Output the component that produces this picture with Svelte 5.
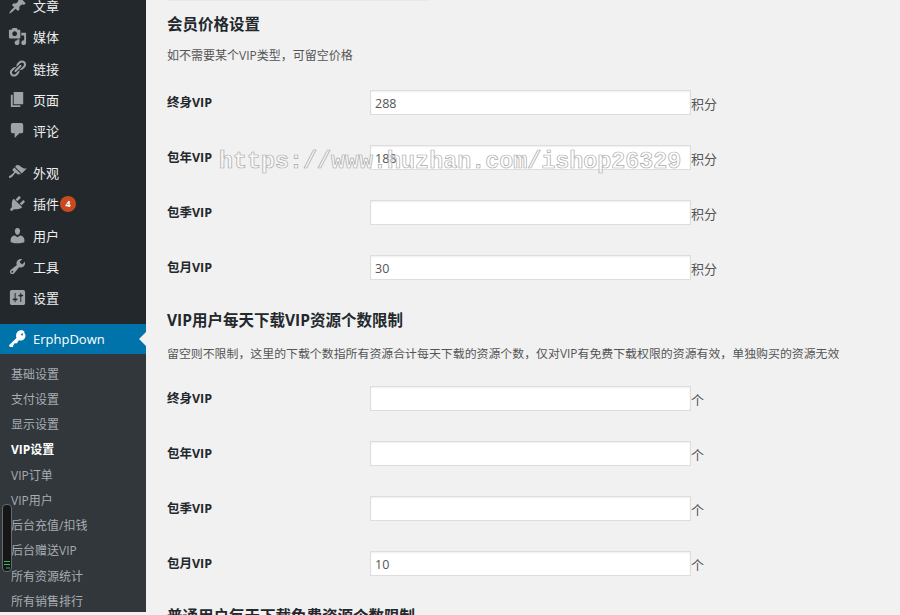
<script>
  const menu1 = [
    { label: "文章", icon: "M10.44 3.02l1.82-1.82 6.36 6.35-1.83 1.82c-1.05-.68-2.48-.57-3.41.36l-.75.75c-.92.93-1.04 2.35-.35 3.41l-1.83 1.82-2.41-2.41-2.8 2.79c-.42.42-3.38 2.71-3.8 2.29s1.86-3.39 2.28-3.81l2.79-2.79L4.1 9.36l1.83-1.82c1.05.69 2.48.57 3.4-.36l.75-.75c.93-.92 1.05-2.35.36-3.41z" },
    { label: "媒体", icon: "M13 11V4c0-.55-.45-1-1-1h-1.67L9 1H5L3.67 3H2c-.55 0-1 .45-1 1v7c0 .55.45 1 1 1h10c.55 0 1-.45 1-1zM7 4.5c1.38 0 2.5 1.12 2.5 2.5S8.38 9.5 7 9.5 4.5 8.38 4.5 7 5.62 4.5 7 4.5zM14 6h5v10.5c0 1.38-1.12 2.5-2.5 2.5S14 17.88 14 16.5s1.12-2.5 2.5-2.5c.17 0 .34.02.5.05V9h-3V6zm-4 8.05V13h2v3.5c0 1.38-1.12 2.5-2.5 2.5S7 17.88 7 16.5 8.12 14 9.5 14c.17 0 .34.02.5.05z" },
    { label: "链接", icon: "M17.74 2.76c1.68 1.69 1.68 4.41 0 6.1l-1.53 1.52c-1.12 1.12-2.7 1.47-4.14 1.09l2.62-2.61.76-.77.76-.76c.84-.84.84-2.2 0-3.04-.84-.85-2.2-.85-3.04 0l-.77.76-3.38 3.38c-.37-1.44-.02-3.02 1.1-4.14l1.52-1.53c1.69-1.68 4.42-1.68 6.1 0zM8.59 13.43l5.34-5.34c.42-.42.42-1.1 0-1.52-.44-.43-1.13-.39-1.53 0l-5.33 5.34c-.42.42-.42 1.1 0 1.52.44.43 1.13.39 1.52 0zm-.76 2.29l4.14-4.15c.38 1.44.03 3.02-1.09 4.14l-1.52 1.53c-1.69 1.68-4.41 1.68-6.1 0-1.68-1.68-1.68-4.42 0-6.1l1.53-1.52c1.12-1.12 2.7-1.47 4.14-1.1l-4.14 4.15c-.85.84-.85 2.2 0 3.05.84.84 2.2.84 3.04 0z" },
    { label: "页面", icon: "M6 15V2h10v13H6zm-1 1h8v2H3V5h2v11z" },
    { label: "评论", icon: "M5 2h9c1.1 0 2 .9 2 2v7c0 1.1-.9 2-2 2h-2l-5 5v-5H5c-1.1 0-2-.9-2-2V4c0-1.1.9-2 2-2z" },
  ];
  const menu2 = [
    { label: "外观", icon: "M14.48 11.06L7.41 3.99l1.5-1.5c.5-.56 2.3-.47 3.51.32 1.21.8 1.43 1.28 2.91 2.1 1.18.64 2.45 1.26 4.45.85zm-.71.71L6.7 4.7 4.93 6.47c-.39.39-.39 1.02 0 1.41l1.06 1.06c.39.39.39 1.03 0 1.42-.6.6-1.43 1.11-2.21 1.69-.35.26-.7.53-1.01.84C1.43 13.23.4 14.75 1.2 15.55c.8.79 2.32-.24 3.69-1.57.31-.31.58-.66.84-1.01.58-.78 1.09-1.61 1.69-2.21.39-.39 1.02-.39 1.41 0l1.06 1.06c.39.39 1.02.39 1.41 0z" },
    { label: "插件", badge: 4, icon: "M13.11 4.36L9.87 7.6 8 5.73l3.24-3.24c.35-.34 1.05-.2 1.56.32.52.51.66 1.21.31 1.55zm-8 1.77l.91-1.12 9.01 9.01-1.19.84c-.71.71-2.63 1.16-3.82 1.16H6.14L4.9 17.26c-.59.59-1.54.59-2.12 0-.59-.58-.59-1.53 0-2.12l1.24-1.24v-3.88c0-1.13.4-3.19 1.09-3.89zm7.26 3.97l3.24-3.24c.34-.35 1.04-.21 1.55.31.52.51.66 1.21.31 1.55l-3.24 3.25z" },
    { label: "用户", icon: "M10 9.25c-2.27 0-2.73-3.44-2.73-3.44C7 4.02 7.82 2 9.97 2c2.16 0 2.98 2.02 2.71 3.81 0 0-.41 3.44-2.68 3.44zm0 2.57L12.72 10c2.39 0 4.52 2.33 4.52 4.53v2.49s-3.65 1.13-7.24 1.13c-3.65 0-7.24-1.13-7.24-1.13v-2.49c0-2.25 1.94-4.48 4.47-4.48z" },
    { label: "工具", icon: "M16.68 9.77c-1.34 1.34-3.3 1.67-4.95.99l-5.41 6.52c-.99.99-2.59.99-3.58 0s-.99-2.59 0-3.57l6.52-5.42c-.68-1.65-.35-3.61.99-4.95 1.28-1.28 3.12-1.62 4.72-1.06l-2.89 2.89 2.82 2.82 2.86-2.87c.53 1.58.18 3.39-1.08 4.65zM3.81 16.21c.4.39 1.04.39 1.43 0 .4-.4.4-1.04 0-1.43-.39-.4-1.03-.4-1.43 0-.39.39-.39 1.03 0 1.43z" },
    { label: "设置", icon: "M18 16V4c0-1.1-.9-2-2-2H4c-1.1 0-2 .9-2 2v12c0 1.1.9 2 2 2h12c1.1 0 2-.9 2-2zM8 11h1c.55 0 1 .45 1 1s-.45 1-1 1H8v1.5c0 .28-.22.5-.5.5s-.5-.22-.5-.5V13H6c-.55 0-1-.45-1-1s.45-1 1-1h1V5.5c0-.28.22-.5.5-.5s.5.22.5.5V11zm5-2h-1c-.55 0-1-.45-1-1s.45-1 1-1h1V5.5c0-.28.22-.5.5-.5s.5.22.5.5V7h1c.55 0 1 .45 1 1s-.45 1-1 1h-1v5.5c0 .28-.22.5-.5.5s-.5-.22-.5-.5V9z" },
  ];
  const keyIcon = "M16.95 2.58c1.96 1.95 1.96 5.12 0 7.07-1.51 1.51-3.75 1.84-5.59 1.01l-1.87 3.31-2.99.31L5 18H2l-1-2 7.95-7.69c-.92-2.26-.5-4.87 1.32-6.69 1.95-1.95 5.12-1.96 7.08-.04zm-2.83 2.83c.39.39 1.02.39 1.41 0 .39-.39.39-1.02 0-1.41-.39-.39-1.02-.39-1.41 0-.39.39-.39 1.02 0 1.41z";
  const submenu = ["基础设置", "支付设置", "显示设置", "VIP设置", "VIP订单", "VIP用户", "后台充值/扣钱", "后台赠送VIP", "所有资源统计", "所有销售排行"];

  const prices = [
    { label: "终身VIP", value: "288" },
    { label: "包年VIP", value: "188" },
    { label: "包季VIP", value: "" },
    { label: "包月VIP", value: "30" },
  ];
  const limits = [
    { label: "终身VIP", value: "" },
    { label: "包年VIP", value: "" },
    { label: "包季VIP", value: "" },
    { label: "包月VIP", value: "10" },
  ];
</script>

<div class="page">
  <aside class="sidebar">
    <nav class="menu">
      {#each menu1 as m}
        <div class="item">
          <svg viewBox="0 0 20 20"><path d={m.icon} /></svg>
          <span>{m.label}</span>
        </div>
      {/each}
      <div class="sep"></div>
      {#each menu2 as m}
        <div class="item">
          <svg viewBox="0 0 20 20"><path d={m.icon} /></svg>
          <span>{m.label}</span>
          {#if m.badge}<b class="badge">{m.badge}</b>{/if}
        </div>
      {/each}
      <div class="sep"></div>
      <div class="item current">
        <svg viewBox="0 0 20 20"><path d={keyIcon} /></svg>
        <span>ErphpDown</span>
        <i class="arrow"></i>
      </div>
      <div class="sub">
        {#each submenu as s}
          <div class="sub-item" class:on={s === "VIP设置"}>{s}</div>
        {/each}
      </div>
    </nav>
  </aside>

  <main class="content">
    <div class="topline"></div>
    <h2 class="first">会员价格设置</h2>
    <p>如不需要某个VIP类型，可留空价格</p>
    <div class="rows">
      {#each prices as r}
        <div class="row">
          <label>{r.label}</label>
          <input value={r.value} />
          <span class="unit">积分</span>
        </div>
      {/each}
    </div>

    <h2>VIP用户每天下载VIP资源个数限制</h2>
    <p class="second">留空则不限制，这里的下载个数指所有资源合计每天下载的资源个数，仅对VIP有免费下载权限的资源有效，单独购买的资源无效</p>
    <div class="rows">
      {#each limits as r}
        <div class="row">
          <label>{r.label}</label>
          <input value={r.value} />
          <span class="unit">个</span>
        </div>
      {/each}
    </div>

    <h2>普通用户每天下载免费资源个数限制</h2>
  </main>

  <!-- overlays on the screenshot -->
  <div class="watermark">https://www.huzhan.com/ishop26329</div>
  <div class="meter"><i></i><i></i><i class="low"></i></div>
</div>

<style>
  :global(body) { margin: 0; background: #f1f1f1; }
  .page {
    position: relative; width: 900px; height: 615px; overflow: hidden; display: flex;
    background: #f1f1f1; color: #23282d;
    font-family: "Open Sans", "Noto Sans CJK SC", sans-serif;
  }

  .sidebar { width: 146px; height: 612px; flex: none; overflow: hidden; background: #23282d; }
  .menu { margin-top: -10px; }
  .item { position: relative; display: flex; align-items: center; height: 31.25px; color: #eee; font-size: 13px; }
  .item svg { width: 19px; height: 19px; margin-left: 8px; margin-right: 6px; fill: #9ea3a8; flex: none; }
  .sep { height: 10.75px; }
  .badge {
    width: 16px; height: 16px; margin-left: 1px; border-radius: 50%; background: #ca4a1f; color: #fff;
    font-size: 9px; line-height: 16px; text-align: center;
  }
  .current { height: 30px; background: #0073aa; color: #fff; }
  .current svg { fill: #fff; }
  .arrow {
    position: absolute; right: 0; top: 8px; width: 0; height: 0;
    border: 7px solid transparent; border-left-width: 0; border-right-color: #f1f1f1;
  }
  .sub { background: #32373c; padding: 7.5px 0 10px; }
  .sub-item { height: 25.25px; line-height: 25.25px; padding-left: 11px; font-size: 12px; color: #a8adb2; white-space: nowrap; }
  .sub-item.on { color: #fff; font-weight: 700; }

  .content { position: relative; flex: 1; min-width: 0; padding-left: 21px; }
  .topline { position: absolute; left: 21px; top: 0; width: 262px; height: 1px; background: #e9e9e9; }
  h2 { margin: 29px 0 0; font-size: 15.5px; line-height: 22px; font-weight: 700; color: #23282d; }
  h2.first { margin-top: 13px; }
  p { margin: 11px 0 0; font-size: 12px; line-height: 20px; color: #555; white-space: nowrap; }
  p.second { margin: 12px 0 -1px; font-size: 11.92px; }
  .rows { display: flex; flex-direction: column; gap: 30px; margin-top: 24px; }
  .row { display: flex; align-items: center; height: 25px; font-size: 12.5px; }
  .row label { width: 203px; flex: none; font-weight: 700; color: #23282d; padding-bottom: 2px; }
  .row input {
    box-sizing: border-box; width: 321px; height: 25px; margin: 0; padding: 2px 4px 0; flex: none;
    border: 1px solid #ddd; box-shadow: inset 0 1px 2px rgba(0, 0, 0, 0.07); background: #fff; outline: none;
    font: 12.5px "Open Sans", sans-serif; color: #555;
  }
  .unit { font-size: 13px; color: #555; position: relative; top: 1px; }

  .watermark {
    position: absolute; left: 219px; top: 147px;
    font: 700 23.35px/30px "Liberation Mono", monospace; white-space: nowrap;
    color: rgba(255, 255, 255, 0.6); -webkit-text-stroke: 0.7px #aaa;
  }
  .meter {
    position: absolute; left: 2px; top: 504px; box-sizing: border-box; width: 10px; height: 68px;
    padding: 0 1px 2px; display: flex; flex-direction: column; justify-content: flex-end; gap: 2px;
    background: #141618; border: 1px solid #6a6a6a; border-radius: 4px;
  }
  .meter i { display: block; height: 1px; background: #3fb75a; }
  .meter i.low { width: 4px; height: 2px; margin-left: 2px; background: #1f6d33; }
</style>
